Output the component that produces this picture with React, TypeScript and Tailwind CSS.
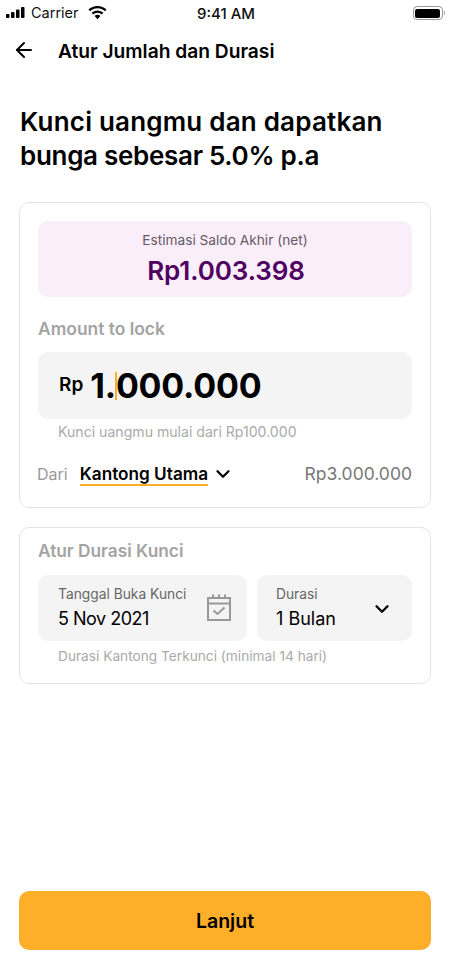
import { ArrowLeft, ChevronDown } from "lucide-react";

function StatusBar() {
  return (
    <div className="h-[26px] px-[6px] flex items-center justify-between text-[14.500px] text-[#111] relative">
      <div className="flex items-center gap-[4px]">
        <svg width="20" height="12" viewBox="0 0 20 12" fill="#000">
          <rect x="0" y="7" width="3.500" height="4" rx="1" />
          <rect x="5" y="5" width="3.500" height="6" rx="1" />
          <rect x="10" y="2.500" width="3.500" height="8.500" rx="1" />
          <rect x="15" y="0" width="3.500" height="11" rx="1" />
        </svg>
        <span className="ml-[1px]">Carrier</span>
        <svg className="ml-[5px]" width="19" height="14" viewBox="0 0 19 14" fill="#000">
          <path d="M9.500 0C6 0 2.800 1.400.5 3.600l1.600 1.700C4 3.400 6.600 2.300 9.500 2.300s5.500 1.100 7.400 3l1.600-1.700C16.200 1.400 13 0 9.500 0z" />
          <path d="M9.500 4.400c-2.300 0-4.400.9-5.900 2.400l1.600 1.700c1.100-1.100 2.600-1.800 4.300-1.800s3.200.7 4.300 1.800l1.600-1.700c-1.500-1.500-3.600-2.400-5.900-2.400z" />
          <path d="M9.500 8.800c-1.100 0-2.100.4-2.900 1.200l2.900 3.200 2.900-3.200c-.8-.8-1.800-1.200-2.900-1.200z" />
        </svg>
      </div>
      <span className="absolute left-[197px] top-[3px] text-[15px] font-medium">9:41 AM</span>
      <div className="flex items-center mr-[-1px]">
        <div className="w-[30px] h-[14px] rounded-[4px] border border-[#999] p-[1.500px]">
          <div className="w-full h-full rounded-[2px] bg-black" />
        </div>
        <div className="w-[1.500px] h-[4px] bg-[#aaa] ml-[1px]" />
      </div>
    </div>
  );
}

function Field({ label, value, valueClass }: { label: string; value: string; valueClass?: string }) {
  return (
    <div>
      <div className="text-[13.800px] leading-[20px] text-[#666]">{label}</div>
      <div className={"text-[18px] leading-[26px] mt-[2px] text-black " + (valueClass ?? "")}>{value}</div>
    </div>
  );
}

export default function App() {
  return (
    <div className="w-[450px] h-[975px] bg-white flex flex-col font-['Inter',sans-serif]">
      <StatusBar />
      <div className="h-[48px] pl-[12px] flex items-center gap-[22px]">
        <ArrowLeft size={24} strokeWidth={2} className="text-black" />
        <h1 className="text-[19.200px] font-semibold text-black translate-y-[1px]">Atur Jumlah dan Durasi</h1>
      </div>

      <h2 className="mt-[31px] px-[20px] text-[26px] leading-[34px] font-semibold text-black">
        <span className="tracking-[0.2px]">Kunci uangmu dan dapatkan</span>
        <br />
        <span className="tracking-[-0.3px]">bunga sebesar 5.0% p.a</span>
      </h2>

      <div className="mt-[29px] mx-[19px] h-[306px] rounded-[10px] border border-[#e4e4e4] px-[18px] pt-[18px]">
        <div className="h-[76px] rounded-[10px] bg-[#f9eef9] flex flex-col items-center pt-[10px]">
          <div className="text-[13.700px] leading-[18px] text-[#665a66]">Estimasi Saldo Akhir (net)</div>
          <div className="text-[26px] leading-[34px] mt-[5px] ml-[2px] font-semibold tracking-[-0.1px] text-[#4f0060]">Rp1.003.398</div>
        </div>

        <div className="mt-[21px] text-[17.400px] leading-[22px] font-semibold text-[#a3a3a3]">Amount to lock</div>

        <div className="mt-[12px] h-[67px] rounded-[10px] bg-[#f4f4f4] flex items-center pl-[21px]">
          <span className="text-[19px] font-semibold text-black">Rp</span>
          <span className="ml-[7px] text-[34px] font-bold tracking-[-0.2px] text-black">1.</span>
          <span className="w-[2px] h-[28px] bg-[#ffae29] -ml-[1px] -mr-[1px] relative z-10" />
          <span className="text-[34px] font-bold tracking-[-0.2px] text-black">000.000</span>
        </div>

        <div className="mt-[4px] pl-[20px] text-[14.100px] leading-[18px] text-[#aaa]">Kunci uangmu mulai dari Rp100.000</div>

        <div className="mt-[20px] flex items-center justify-between">
          <div className="flex items-center">
            <span className="text-[16px] text-[#999] -ml-[1px]">Dari</span>
            <span className="ml-[12px] text-[17.200px] leading-[21px] font-semibold text-black border-b-2 border-[#ffae29]">Kantong Utama</span>
            <ChevronDown size={22} strokeWidth={2.500} className="ml-[4px] text-black" />
          </div>
          <span className="text-[17.500px] text-[#777]">Rp3.000.000</span>
        </div>
      </div>

      <div className="mt-[19px] mx-[19px] h-[157px] rounded-[10px] border border-[#e4e4e4] px-[18px] pt-[12px]">
        <div className="text-[17.300px] leading-[22px] font-semibold text-[#a3a3a3]">Atur Durasi Kunci</div>

        <div className="mt-[13px] flex gap-[10px]">
          <div className="w-[209px] h-[66px] rounded-[10px] bg-[#f4f4f4] pl-[20px] pr-[16px] pt-[9px] flex justify-between">
            <Field label="Tanggal Buka Kunci" value="5 Nov 2021" valueClass="tracking-[-0.500px]" />
            <svg className="mt-[10px]" width="24" height="27" viewBox="0 0 24 27" fill="none" stroke="#999" strokeWidth="2">
              <rect x="1" y="4" width="22" height="22" />
              <path d="M1 9.500h22" />
              <path d="M6 0.500v4M12 0.500v4M18 0.500v4" />
              <path d="M6.500 16.500l4 3.500 7-6.500" />
            </svg>
          </div>
          <div className="flex-1 h-[66px] rounded-[10px] bg-[#f4f4f4] pl-[19px] pr-[19px] pt-[9px] flex justify-between">
            <Field label="Durasi" value="1 Bulan" />
            <ChevronDown size={22} strokeWidth={2.500} className="mt-[14px] text-black" />
          </div>
        </div>

        <div className="mt-[6px] pl-[20px] text-[13.700px] leading-[18px] text-[#aaa]">Durasi Kantong Terkunci (minimal 14 hari)</div>
      </div>

      <div className="mt-auto mb-[25px] mx-[19px] h-[59px] rounded-[10px] bg-[#ffae29] flex items-center justify-center">
        <span className="text-[19.500px] font-semibold text-black translate-y-[1px]">Lanjut</span>
      </div>
    </div>
  );
}
